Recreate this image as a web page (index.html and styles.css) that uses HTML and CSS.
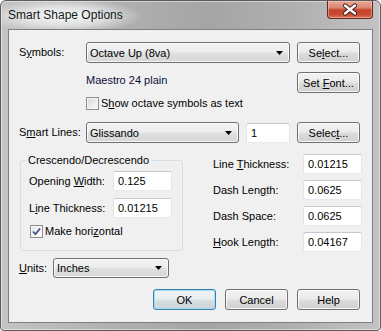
FILE: index.html
```html
<!DOCTYPE html>
<html>
<head>
<meta charset="utf-8">
<link rel="stylesheet" href="styles.css">
</head>
<body>
<div class="window">
  <div class="titlebar">
    <span class="title">Smart Shape Options</span>
    <div class="close">
      <svg width="44" height="17" viewBox="0 0 44 17">
        <path d="M17 4.5 L27 12.5 M27 4.5 L17 12.5" stroke="#3a1a14" stroke-width="4.2" stroke-linecap="round"/>
        <path d="M17 4.5 L27 12.5 M27 4.5 L17 12.5" stroke="#ffffff" stroke-width="2.4" stroke-linecap="round"/>
      </svg>
    </div>
  </div>
  <div class="client">
    <div class="row r1">
      <span class="lbl lbl-main">S<u>y</u>mbols:</span>
      <div class="combo w-sym"><span>Octave Up (8va)</span><svg class="arrow" width="7" height="4" viewBox="0 0 7 4"><path d="M0 0 H7 L3.5 4 Z" fill="#000"/></svg></div>
      <div class="btn"><span>Se<u>l</u>ect...</span></div>
    </div>
    <div class="row r2">
      <span class="fontname">Maestro 24 plain</span>
      <div class="btn"><span>Set <u>F</u>ont...</span></div>
    </div>
    <div class="row r3">
      <span class="chk"></span>
      <span class="chk-text">S<u>h</u>ow octave symbols as text</span>
    </div>
    <div class="row r4">
      <span class="lbl lbl-main">S<u>m</u>art Lines:</span>
      <div class="combo w-lines"><span>Glissando</span><svg class="arrow" width="7" height="4" viewBox="0 0 7 4"><path d="M0 0 H7 L3.5 4 Z" fill="#000"/></svg></div>
      <div class="field w-num">1</div>
      <div class="btn"><span>Selec<u>t</u>...</span></div>
    </div>
    <div class="middle">
      <fieldset class="group">
        <legend>Crescendo/Decrescendo</legend>
        <div class="grow">
          <span class="lbl lbl-group">Opening <u>W</u>idth:</span>
          <div class="field w-val">0.125</div>
        </div>
        <div class="grow gap">
          <span class="lbl lbl-group">L<u>i</u>ne Thickness:</span>
          <div class="field w-val">0.01215</div>
        </div>
        <div class="grow chkrow">
          <span class="chk checked"><svg width="11" height="11" viewBox="0 0 11 11"><path d="M2 5.5 L4.5 8.2 L9 2.5" fill="none" stroke="#40528a" stroke-width="1.8"/></svg></span>
          <span class="chk-text">Make hori<u>z</u>ontal</span>
        </div>
      </fieldset>
      <div class="rightcol">
        <div class="rrow">
          <span class="lbl lbl-right">Line <u>T</u>hickness:</span>
          <div class="field w-val">0.01215</div>
        </div>
        <div class="rrow">
          <span class="lbl lbl-right">Dash Len<u>g</u>th:</span>
          <div class="field w-val">0.0625</div>
        </div>
        <div class="rrow">
          <span class="lbl lbl-right">Dash Space:</span>
          <div class="field w-val">0.0625</div>
        </div>
        <div class="rrow">
          <span class="lbl lbl-right"><u>H</u>ook Length:</span>
          <div class="field w-val">0.04167</div>
        </div>
      </div>
    </div>
    <div class="row r5">
      <span class="lbl lbl-units"><u>U</u>nits:</span>
      <div class="combo w-units"><span>Inches</span><svg class="arrow" width="7" height="4" viewBox="0 0 7 4"><path d="M0 0 H7 L3.5 4 Z" fill="#000"/></svg></div>
    </div>
    <div class="row buttons">
      <div class="btn default"><span>OK</span></div>
      <div class="btn"><span>Cancel</span></div>
      <div class="btn"><span>Help</span></div>
    </div>
  </div>
</div>
</body>
</html>
```

FILE: styles.css
```css
* { box-sizing: border-box; }
html, body { margin: 0; padding: 0; }
body {
  width: 381px;
  height: 331px;
  overflow: hidden;
  font-family: "Liberation Sans", Arial, sans-serif;
  font-size: 11px;
  color: #000;
  background: #ffffff;
}
u { text-decoration: underline; text-underline-offset: 1px; }

.window {
  width: 381px;
  height: 331px;
  border: 1px solid #5c5c5c;
  border-radius: 6px 6px 4px 4px;
  padding: 0 7px 7px 7px;
  display: flex;
  flex-direction: column;
  background:
    radial-gradient(ellipse 78px 17px at 64px 15px, rgba(255,255,255,0.92) 0%, rgba(255,255,255,0.55) 55%, rgba(255,255,255,0) 100%),
    linear-gradient(to right, #c4c4c4 0%, #b0b0b0 30%, #a5a5a5 55%, #b0b0b0 78%, #c3c3c3 100%);
  box-shadow: inset 0 0 0 1px rgba(255,255,255,0.45);
}
.titlebar {
  height: 28px;
  display: flex;
  justify-content: space-between;
  align-items: flex-start;
}
.title {
  font-size: 12px;
  line-height: 15px;
  margin-top: 7px;
  color: #101820;
}
.close {
  width: 46px;
  height: 18px;
  border: 1px solid #5e2a22;
  border-top: none;
  border-radius: 0 0 4px 4px;
  background: linear-gradient(#e8a898 0%, #dc8672 40%, #c4442c 52%, #c94a30 80%, #dc7a5c 100%);
  box-shadow: inset 0 0 0 1px rgba(255,210,200,0.45);
  display: flex;
  align-items: center;
  justify-content: center;
}
.close svg { display: block; }

.client {
  width: 365px;
  height: 294px;
  border: 1px solid #7b7f86;
  background: #f0f0f0;
  display: flex;
  flex-direction: column;
}

.row { display: flex; align-items: center; }
.r1 { margin-top: 12px; height: 21px; padding-left: 10px; }
.r2 { margin-top: 9px; height: 21px; padding-left: 77px; align-items: flex-start; }
.r3 { margin-top: 4px; height: 13px; padding-left: 77px; }
.r4 { margin-top: 12px; height: 21px; padding-left: 10px; }
.r5 { margin-top: 6px; height: 20px; padding-left: 10px; }
.buttons { margin-top: 11px; height: 21px; justify-content: flex-end; padding-right: 12px; gap: 9px; }

.lbl { white-space: nowrap; line-height: 13px; }
.lbl-main { width: 67px; }
.lbl-units { width: 34px; }
.lbl-group { width: 84px; }
.lbl-right { width: 90px; }

.fontname { width: 204px; margin-top: 2px; line-height: 13px; color: #0c0c38; }

.combo {
  height: 21px;
  display: flex;
  align-items: center;
  justify-content: space-between;
  border: 1px solid #707070;
  border-radius: 3px;
  padding: 0 6px 0 3px;
  background: linear-gradient(#f4f4f4 0%, #ececec 48%, #e0e0e0 52%, #d6d6d6 100%);
  box-shadow: inset 0 0 0 1px rgba(255,255,255,0.75);
  white-space: nowrap;
}
.combo .arrow { display: block; }
.w-sym { width: 204px; }
.w-lines { width: 153px; }
.w-units { width: 116px; height: 20px; }

.btn {
  width: 63px;
  height: 21px;
  margin-left: 7px;
  display: flex;
  align-items: center;
  justify-content: center;
  border: 1px solid #707070;
  border-radius: 3px;
  background: linear-gradient(#f2f2f2 0%, #ebebeb 48%, #dddddd 52%, #cfcfcf 100%);
  box-shadow: inset 0 0 0 1px rgba(255,255,255,0.8);
  white-space: nowrap;
}
.buttons .btn { margin-left: 0; }
.btn.default {
  border-color: #3c7fb1;
  box-shadow: inset 0 0 0 1px #9fdcf5;
  background: linear-gradient(#f0f4f7 0%, #e8edf0 48%, #d9dfe2 52%, #ccd4d8 100%);
}

.field {
  height: 20px;
  background: #ffffff;
  border: 1px solid;
  border-color: #c5c8ce #e2e4e8 #e6e9ee #e2e4e8;
  border-radius: 2px;
  padding-left: 4px;
  display: flex;
  align-items: center;
  white-space: nowrap;
}
.w-num { width: 44px; margin-left: 7px; }
.w-val { width: 59px; }
.r4 .btn { margin-left: 7px; }

.chk {
  width: 13px;
  height: 13px;
  flex: none;
  border: 1px solid #8e8f8f;
  background: linear-gradient(135deg, #d6d6d6 0%, #f2f2f2 70%, #fbfbfb 100%);
  box-shadow: inset 0 0 0 1px #f6f6f6;
  display: flex;
  align-items: center;
  justify-content: center;
}
.chk.checked { background: linear-gradient(135deg, #e4e4e4 0%, #f8f8f8 70%, #ffffff 100%); }
.chk svg { display: block; }
.chk-text { margin-left: 2px; line-height: 13px; white-space: nowrap; }

.middle {
  margin-top: 11px;
  display: flex;
  align-items: flex-start;
  padding-left: 11px;
}
.group {
  width: 163px;
  margin: 0;
  padding: 4px 0 12px 8px;
  border: 1px solid #d5dfe5;
  border-radius: 3px;
  min-width: 0;
}
.group legend {
  padding: 0 2px;
  margin-left: -3px;
  font-size: 11px;
  line-height: 13px;
}
.grow { display: flex; align-items: center; height: 20px; }
.grow.gap { margin-top: 7px; }
.grow.chkrow { margin-top: 7px; height: 13px; padding-left: 1px; }

.rightcol {
  margin-left: 30px;
  display: flex;
  flex-direction: column;
  gap: 6px;
}
.rrow { display: flex; align-items: center; height: 20px; }
```
